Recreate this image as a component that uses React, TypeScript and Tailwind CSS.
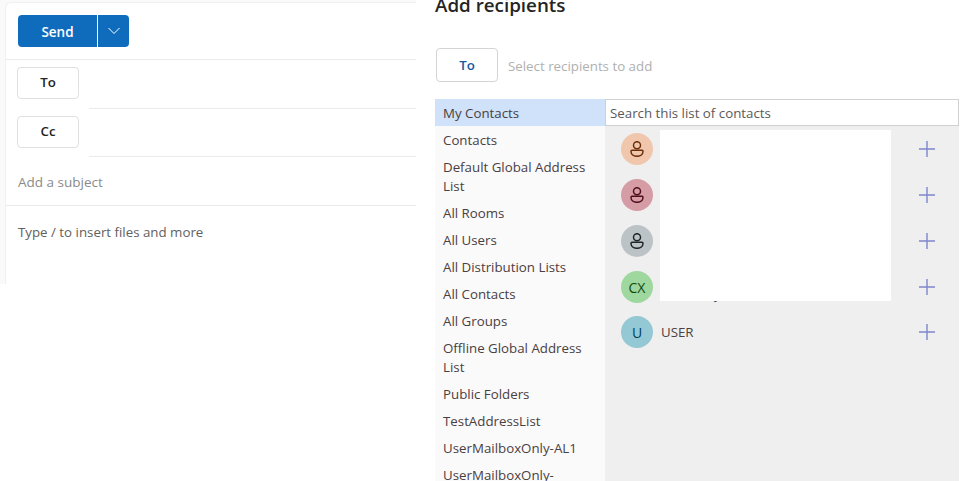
const font = "font-['Open_Sans',sans-serif]";

const nav: { label: string; active?: boolean }[] = [
  { label: "My Contacts", active: true },
  { label: "Contacts" },
  { label: "Default Global Address List" },
  { label: "All Rooms" },
  { label: "All Users" },
  { label: "All Distribution Lists" },
  { label: "All Contacts" },
  { label: "All Groups" },
  { label: "Offline Global Address List" },
  { label: "Public Folders" },
  { label: "TestAddressList" },
  { label: "UserMailboxOnly-AL1" },
  { label: "UserMailboxOnly-AddressList" },
];

function PersonIcon({ color }: { color: string }) {
  return (
    <svg width="16" height="16" viewBox="0 0 16 16" fill="none" stroke={color} strokeWidth="1.5">
      <circle cx="8" cy="4.2" r="3.5" />
      <path d="M3 9.2h10c.6 0 1 .4 1 1 0 2.9-2.6 5.1-6 5.1s-6-2.2-6-5.1c0-.6.4-1 1-1z" />
    </svg>
  );
}

function Plus() {
  return (
    <svg width="16" height="16" viewBox="0 0 16 16" stroke="#7f86cc" strokeWidth="1.4">
      <path d="M8 0v16M0 8h16" />
    </svg>
  );
}

function Row({
  bg,
  color,
  initials,
  name,
  className,
}: {
  bg: string;
  color: string;
  initials?: string;
  name?: string;
  className: string;
}) {
  return (
    <div className={`flex items-center h-8 ${className}`}>
      <div
        className={`ml-4 w-8 h-8 rounded-full flex items-center justify-center text-[14px] font-medium ${bg}`}
        style={{ color }}
      >
        {initials ?? <PersonIcon color={color} />}
      </div>
      <div className="ml-2 flex-1 pt-[2px] text-[13.3px] text-[#4a4042]">{name}</div>
      <div className="mr-6">
        <Plus />
      </div>
    </div>
  );
}

export default function App() {
  return (
    <div className={`${font} w-[978px] h-[481px] overflow-hidden bg-white flex`}>
      <div className="w-[416px] h-[284px] pt-[2px] bg-[#fafafa] shrink-0">
        <div className="ml-[5px] h-[282px] bg-white border-l border-t border-[#f0f0f0] rounded-tl-md">
          <div className="h-[57px] pt-3 pl-3 border-b border-[#ebebeb] flex items-start">
            <div className="flex h-8 w-[111px] rounded bg-[#0f6cbd] text-white overflow-hidden">
              <div className="w-[79px] pt-[2px] flex items-center justify-center text-[13.5px] font-semibold">Send</div>
              <div className="w-px bg-white" />
              <div className="flex-1 flex items-center justify-center">
                <svg width="14" height="8" viewBox="0 0 14 8" fill="none" stroke="white" strokeWidth="1">
                  <path d="M1.5 1 7 6.5 12.5 1" />
                </svg>
              </div>
            </div>
          </div>
          <div className="h-[49px] relative pl-[11px] pt-[7px]">
            <div className="w-[62px] h-8 rounded border border-[#e0e0e0] flex items-center justify-center text-[13.3px] font-semibold text-[#242424]">
              To
            </div>
            <div className="absolute left-[83px] right-0 bottom-0 h-px bg-[#ebebeb]" />
          </div>
          <div className="h-[48px] relative pl-[11px] pt-[7px]">
            <div className="w-[62px] h-8 rounded border border-[#e0e0e0] flex items-center justify-center text-[13.3px] font-semibold text-[#242424]">
              Cc
            </div>
            <div className="absolute left-[83px] right-0 bottom-0 h-px bg-[#ebebeb]" />
          </div>
          <div className="h-[49px] pl-3 pt-[3px] flex items-center text-[13.5px] text-[#8a8a8a] border-b border-[#ebebeb]">
            Add a subject
          </div>
          <div className="pl-3 pt-[17px] text-[13.3px] leading-[19px] text-[#616161]">Type / to insert files and more</div>
        </div>
      </div>

      <div className="flex-1 min-w-0 pl-[19px] pr-[19px]">
        <div className="-mt-[9px] h-[57px] text-[18.8px] leading-[28px] font-semibold text-[#242424]">Add recipients</div>
        <div className="flex items-center h-[34px] pl-px">
          <div className="w-[62px] h-[34px] pt-px border border-[#d4d4d4] rounded-sm flex items-center justify-center text-[13.3px] font-semibold text-[#185a9d]">
            To
          </div>
          <div className="ml-[10px] pt-[3px] text-[13.3px] text-[#b0b0b0]">Select recipients to add</div>
        </div>
        <div className="mt-[17px] flex h-[400px]">
          <div className="w-[170px] bg-[#fafafa] shrink-0 text-[13.3px] leading-[19px] text-[#4a4042]">
            {nav.map((n) => (
              <div key={n.label} className={`px-2 pt-[5px] pb-[3px] ${n.active ? "bg-[#cfe2f9]" : ""}`}>
                {n.label}
              </div>
            ))}
          </div>
          <div className="flex-1 bg-[#efefef] relative">
            <div className="h-[27px] bg-white border border-[#d0d0d0] pl-1 pt-[2px] flex items-center text-[13.3px] text-[#5a5a5a]">
              Search this list of contacts
            </div>
            <div className="pt-[7px]">
              <Row className="mb-[14px]" bg="bg-[#f0c6ad]" color="#6b2e0b" />
              <Row className="mb-[14px]" bg="bg-[#d69ca5]" color="#4d0f1c" />
              <Row className="mb-[14px]" bg="bg-[#bcc3c7]" color="#1f2426" />
              <Row className="mb-[13px]" bg="bg-[#9fd89f]" color="#0e4a0e" initials="CX" />
              <Row className="" bg="bg-[#94c8d4]" color="#00405a" initials="U" name="USER" />
            </div>
            <span className="absolute left-[109px] top-[186px] text-[13.3px] leading-[19px] text-[#4a4042]">y</span>
            <div className="absolute left-[55px] top-[31px] w-[231px] h-[171px] bg-white" />
          </div>
        </div>
      </div>
    </div>
  );
}
